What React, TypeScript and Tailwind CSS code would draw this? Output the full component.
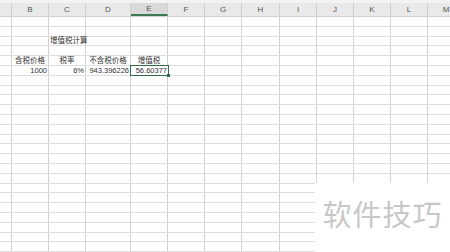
import React from "react";

const cols = [
  { key: "B", w: 37 },
  { key: "C", w: 37 },
  { key: "D", w: 45 },
  { key: "E", w: 37 },
  { key: "F", w: 37 },
  { key: "G", w: 37 },
  { key: "H", w: 38 },
  { key: "I", w: 37 },
  { key: "J", w: 37 },
  { key: "K", w: 37 },
  { key: "L", w: 37 },
  { key: "M", w: 37 },
];

type Cell = { text: string; align?: "left" | "center" | "right"; selected?: boolean };

const data: Record<number, Record<string, Cell>> = {
  2: { C: { text: "增值税计算", align: "left" } },
  4: {
    B: { text: "含税价格", align: "center" },
    C: { text: "税率", align: "center" },
    D: { text: "不含税价格", align: "center" },
    E: { text: "增值税", align: "center" },
  },
  5: {
    B: { text: "1000", align: "right" },
    C: { text: "6%", align: "right" },
    D: { text: "943.396226", align: "right" },
    E: { text: "56.60377", align: "right", selected: true },
  },
};

const rows = Array.from({ length: 24 }, (_, i) => i);

export default function App() {
  return (
    <div
      className="relative w-[450px] h-[252px] overflow-hidden bg-white text-[#333]"
      style={{ fontFamily: '"Liberation Sans", "Noto Sans CJK SC", sans-serif' }}
    >
      {/* top strip */}
      <div className="h-[3px] bg-[#f3f3f3]" />

      {/* column header */}
      <div className="flex h-[14px] bg-[#e9e9e9] border-b border-[#cfcfcf]">
        <div className="w-[12px] shrink-0 border-r border-[#cfcfcf]" />
        {cols.map((c) => (
          <div
            key={c.key}
            style={{ width: c.w }}
            className={
              c.key === "E"
                ? "shrink-0 flex items-center justify-center text-[8px] text-[#555] border-r border-[#cfcfcf] bg-[#d9d9d9] border-b-2 border-b-[#3c7a52]"
                : "shrink-0 flex items-center justify-center text-[8px] text-[#555] border-r border-[#cfcfcf]"
            }
          >
            {c.key}
          </div>
        ))}
      </div>

      {/* rows */}
      {rows.map((r) => (
        <div key={r} className="flex h-[9.8px] border-b border-[#dedede]">
          <div className="w-[12px] shrink-0 border-r border-[#d2d2d2]" />
          {cols.map((c) => {
            const cell = data[r]?.[c.key];
            const align =
              cell?.align === "right"
                ? "justify-end pr-[1px]"
                : cell?.align === "center"
                ? "justify-center"
                : "justify-start pl-[1px]";
            return (
              <div
                key={c.key}
                style={{ width: c.w }}
                className={
                  cell?.selected
                    ? "relative shrink-0 flex items-center overflow-visible whitespace-nowrap text-[7.5px] leading-none justify-end pr-[1px] outline outline-[1.5px] outline-[#2f6b45] z-10"
                    : `shrink-0 flex items-center overflow-visible whitespace-nowrap text-[7.5px] leading-none border-r border-[#d2d2d2] ${align}`
                }
              >
                {cell?.text}
                {cell?.selected && (
                  <span className="absolute -right-[2px] -bottom-[2px] w-[3px] h-[3px] bg-[#2f6b45]" />
                )}
              </div>
            );
          })}
        </div>
      ))}

      {/* watermark */}
      <div className="absolute left-[315px] top-[183px] w-[135px] h-[69px] bg-white flex items-center justify-center">
        <span
          className="text-[29px] text-[#c8c8c8] tracking-[1px] -mt-[8px]"
          style={{ fontFamily: '"Noto Sans CJK SC", sans-serif' }}
        >
          软件技巧
        </span>
      </div>
    </div>
  );
}
